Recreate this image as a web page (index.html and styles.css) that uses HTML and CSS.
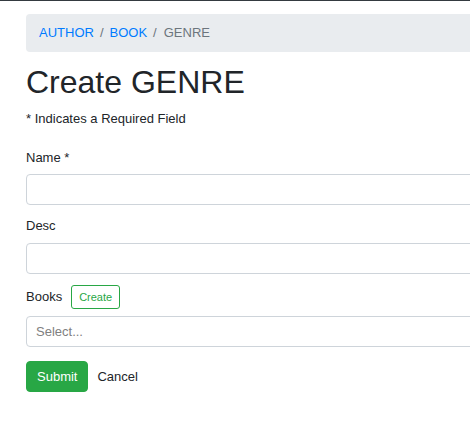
FILE: index.html
```html
<!DOCTYPE html>
<html>
<head>
<meta charset="utf-8">
<link rel="stylesheet" href="styles.css">
</head>
<body>
<div class="topbar"></div>
<div class="container">
  <nav class="breadcrumb">
    <a href="#">AUTHOR</a><span class="sep">/</span><a href="#">BOOK</a><span class="sep">/</span><span class="active">GENRE</span>
  </nav>
  <h1 class="title">Create GENRE</h1>
  <p class="note">* Indicates a Required Field</p>
  <form class="form">
    <div class="group">
      <label class="label">Name *</label>
      <div class="control"></div>
    </div>
    <div class="group">
      <label class="label">Desc</label>
      <div class="control"></div>
    </div>
    <div class="group">
      <div class="label-row"><label class="label">Books</label><button type="button" class="btn-outline">Create</button></div>
      <div class="control select"><span class="placeholder">Select...</span></div>
    </div>
    <div class="actions">
      <button type="button" class="btn-submit">Submit</button>
      <a href="#" class="cancel">Cancel</a>
    </div>
  </form>
</div>
</body>
</html>
```
FILE: styles.css
```css
html, body { margin: 0; padding: 0; overflow: hidden; background: #fff; }
body { font-family: "Liberation Sans", Arial, sans-serif; font-size: 13px; color: #212529; line-height: 1.5; }
.topbar { height: 1px; background: #343a40; }
.container { padding: 13px 0 0 26px; width: 470px; }
.breadcrumb { display: flex; align-items: center; height: 38px; padding: 0 13px; background: #e9ecef; border-radius: 4px; box-sizing: border-box; }
.breadcrumb a { color: #007bff; text-decoration: none; }
.breadcrumb .sep { color: #6c757d; padding: 0 6px; }
.breadcrumb .active { color: #6c757d; padding-left: 1px; }
.title { font-size: 32px; font-weight: 500; line-height: 1.2; margin: 11px 0 8px; }
.note { margin: 0 0 19px; }
.group { margin-bottom: 11px; }
.label { display: block; margin-bottom: 7px; }
.control { height: 31px; border: 1px solid #ced4da; border-radius: 4px; box-sizing: border-box; background: #fff; }
.label-row { display: flex; align-items: center; margin-bottom: 7px; }
.label-row .label { margin: 0 9px 0 0; }
.btn-outline { font-family: inherit; font-size: 11px; color: #28a745; background: #fff; border: 1px solid #28a745; border-radius: 3px; height: 24px; padding: 0 7px; }
.select { display: flex; align-items: center; padding-left: 9px; }
.placeholder { color: #808080; }
.actions { display: flex; align-items: center; gap: 9px; margin-top: 14px; }
.btn-submit { font-family: inherit; font-size: 13px; color: #fff; background: #28a745; border: 1px solid #28a745; border-radius: 4px; height: 31px; padding: 0 10px; }
.cancel { color: #212529; text-decoration: none; }
```
